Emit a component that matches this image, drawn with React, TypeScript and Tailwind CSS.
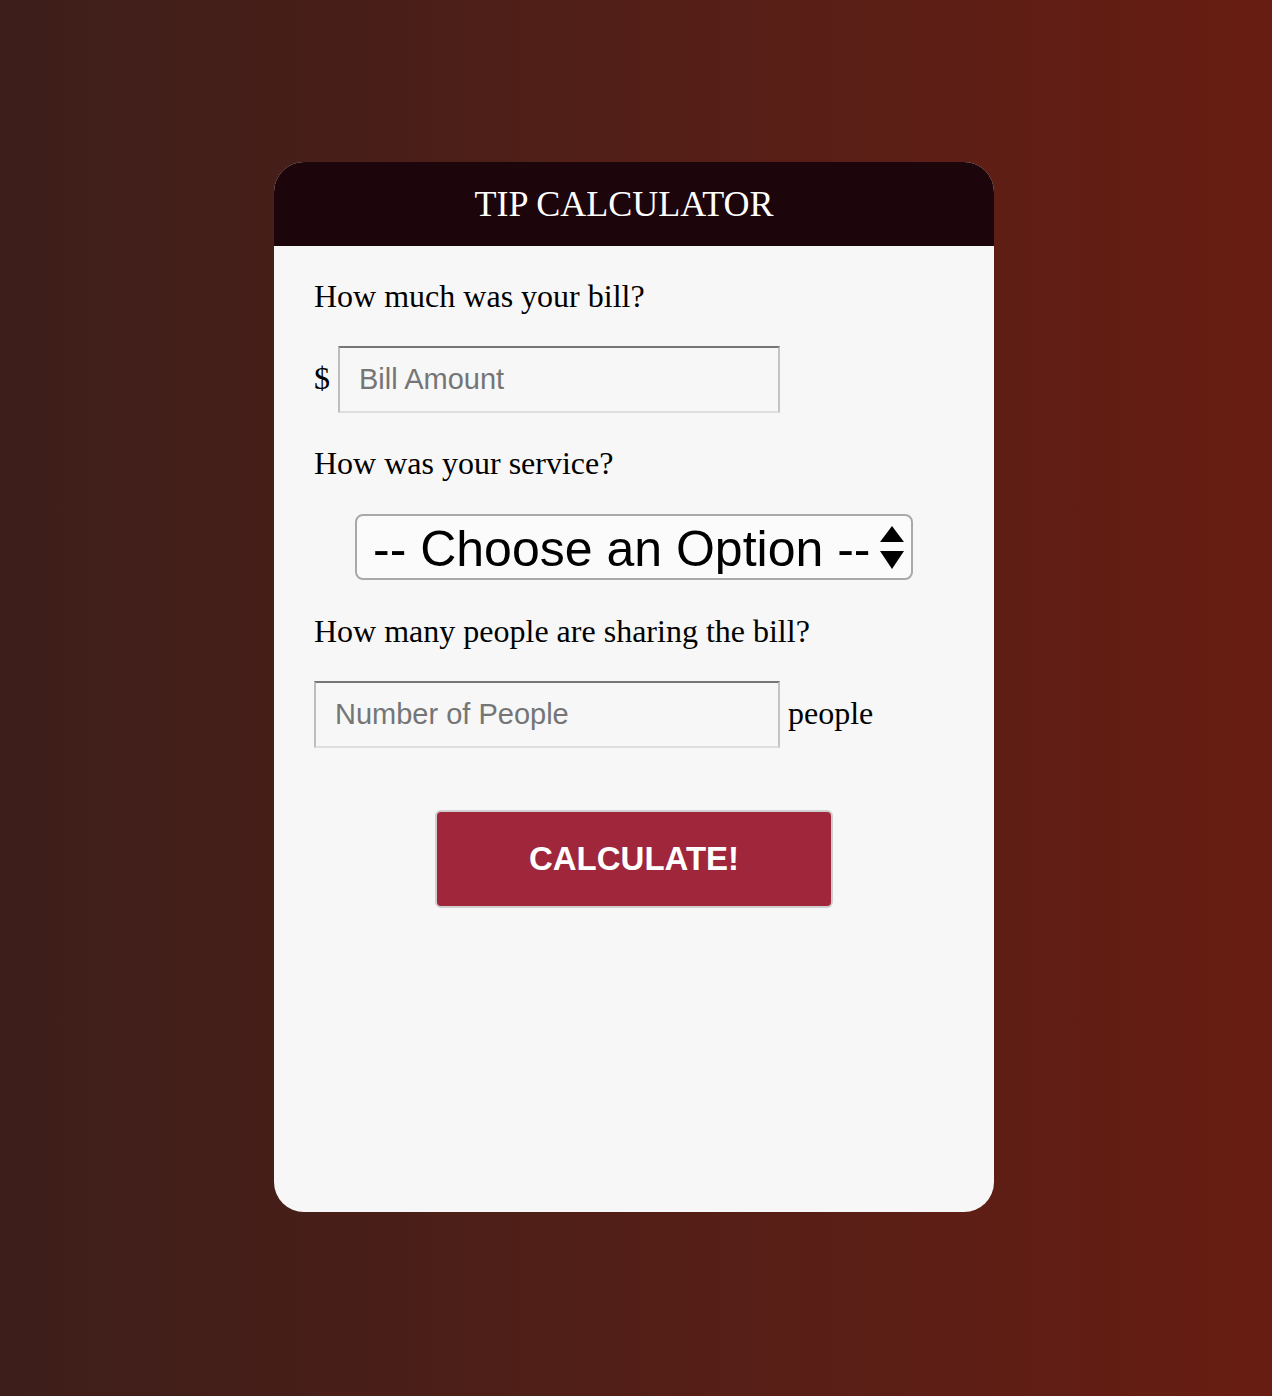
import React, { useState } from "react";

const serif = "font-['Liberation_Serif','Times_New_Roman',serif]";
const sans = "font-['Liberation_Sans',Arial,sans-serif]";

const inputBorder =
  "border-2 border-t-[#767676] border-l-[#bdbdbd] border-r-[#c4c4c4] border-b-[#dedede] bg-[#f7f7f7] outline-none";

const App = () => {
  const [bill, setBill] = useState("");
  const [people, setPeople] = useState("");
  const [service, setService] = useState("");

  return (
    <div className="min-h-screen w-full bg-gradient-to-r from-[#3d1e1a] to-[#681d12] pt-[162px] pr-1 flex justify-center items-start">
      <div className="w-[720px] h-[1050px] bg-[#f7f7f7] rounded-[30px] overflow-hidden">
        {/* header */}
        <div className="h-[84px] bg-[#1c050b] flex items-center justify-center pr-5">
          <h1 className={`${serif} text-white text-[36px] leading-none`}>TIP CALCULATOR</h1>
        </div>

        <div className="px-10 pt-8">
          <p className={`${serif} text-black text-[32px] leading-[36px]`}>How much was your bill?</p>

          <div className="mt-8 flex items-center">
            <span className={`${serif} text-[32px] text-black mr-2 -mt-1`}>$</span>
            <input
              value={bill}
              onChange={(e) => setBill(e.target.value)}
              placeholder="Bill Amount"
              className={`${sans} ${inputBorder} w-[442px] h-[67px] pl-[19px] text-[29px] placeholder:text-[#757575]`}
            />
          </div>

          <p className={`${serif} mt-8 text-black text-[32px] leading-[36px]`}>How was your service?</p>

          <div className="mt-[33px] flex justify-center">
            <div className="relative w-[558px] h-[66px]">
              <select
                value={service}
                onChange={(e) => setService(e.target.value)}
                className={`${sans} appearance-none w-full h-full rounded-[8px] border-2 border-[#a9a9a9] bg-[#fbfbfb] pl-4 pt-[4px] pb-0 leading-[50px] text-[50px] text-black outline-none`}
              >
                <option value="" disabled>
                  -- Choose an Option --
                </option>
                <option value="0.3">30% - Outstanding</option>
                <option value="0.2">20% - Good</option>
                <option value="0.15">15% - It was OK</option>
                <option value="0.1">10% - Bad</option>
                <option value="0.05">5% - Terrible</option>
              </select>
              <svg
                className="absolute right-[8px] top-[11px] pointer-events-none"
                width="26"
                height="46"
                viewBox="0 0 26 46"
              >
                <polygon points="13,1 25,17 1,17" fill="#000" />
                <polygon points="1,26 25,26 13,44" fill="#000" />
              </svg>
            </div>
          </div>

          <p className={`${serif} mt-[33px] text-black text-[32px] leading-[36px]`}>
            How many people are sharing the bill?
          </p>

          <div className="mt-8 flex items-center">
            <input
              value={people}
              onChange={(e) => setPeople(e.target.value)}
              placeholder="Number of People"
              className={`${sans} ${inputBorder} w-[466px] h-[67px] pl-[19px] text-[29px] placeholder:text-[#757575]`}
            />
            <span className={`${serif} text-[32px] text-black ml-2 -mt-1`}>people</span>
          </div>

          <div className="mt-[62px] flex justify-center">
            <button
              type="button"
              className={`${sans} w-[398px] h-[98px] rounded-[6px] border-2 border-[#cfcfcf] bg-[#a0263b] text-white text-[33px] font-bold`}
            >
              CALCULATE!
            </button>
          </div>
        </div>
      </div>
    </div>
  );
};

export default App;
